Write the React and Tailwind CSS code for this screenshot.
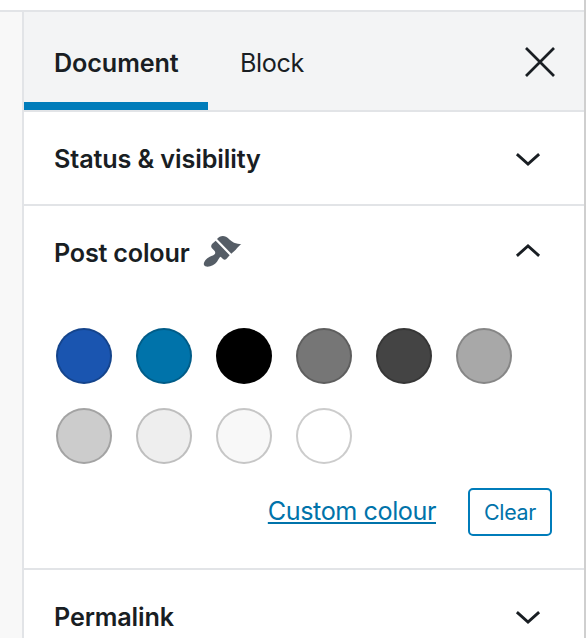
import React from "react";

const swatches = [
  "bg-[#1a55b0]",
  "bg-[#0073aa]",
  "bg-[#000000]",
  "bg-[#767676]",
  "bg-[#444444]",
  "bg-[#a8a8a8]",
  "bg-[#cccccc]",
  "bg-[#eeeeee]",
  "bg-[#f8f8f8]",
  "bg-[#ffffff]",
];

function Chevron({ up = false }) {
  return (
    <svg
      className={up ? "size-12 -scale-y-100" : "size-12"}
      viewBox="0 0 48 48"
      fill="none"
      stroke="#191e23"
      strokeWidth="2.9"
    >
      <path d="M12.9 20.2 24 30l11.1-9.8" />
    </svg>
  );
}

function Brush() {
  return (
    <svg className="mb-[3px] ml-[13px] h-[34px] w-10" viewBox="36 27 120 102" fill="#555d66">
      <path d="M81 42C88 34 97 31 108 35C116 39 122 48 132 53C139 56 147 56 154 57C145 63 138 76 124 86Z" />
      <path d="M77 47 119 91 109 102Q104 106 99 102L92 95C87 97 86 103 81 110C73 120 58 128 46 124C39 121 41 113 46 106C53 96 66 93 71 90C76 87 77 83 74 78L66 70Q61 64 66 57Z" />
    </svg>
  );
}

function PanelTitle({ children, up, icon, className = "" }) {
  return (
    <button className="flex h-[92px] w-full items-center pr-8 pl-[30px] text-left">
      <span className={`pt-0.5 text-[25.2px] leading-9 font-semibold whitespace-nowrap ${className}`}>
        {children}
      </span>
      {icon}
      <span className="ml-auto">
        <Chevron up={up} />
      </span>
    </button>
  );
}

export default function App() {
  return (
    <div className="flex h-[638px] w-[586px] overflow-hidden bg-white font-['Inter','Liberation_Sans',sans-serif] text-[#191e23]">
      <div className="flex w-[584px] flex-col">
        <div className="h-3 shrink-0 border-b-2 border-[#e2e4e7]" />
        <div className="flex min-h-0 flex-1">
          <div className="w-[22px] shrink-0 bg-[#f8f8f8]" />
          <aside className="w-[562px] shrink-0 border-l-2 border-[#e2e4e7]">
            <header className="flex h-[100px] items-stretch border-b-2 border-[#e2e4e7] bg-[#f3f4f5] text-[25.2px]">
              <button className="flex w-[184px] items-center border-b-8 border-[#007cba] pt-[13px] pl-[30px] font-semibold tracking-[-0.12px]">
                Document
              </button>
              <button className="flex items-center pt-[5px] pl-8 tracking-[-0.4px]">Block</button>
              <button className="mr-5 ml-auto flex items-center pt-[2px]" aria-label="Close settings">
                <svg className="size-12" viewBox="0 0 48 48" fill="none" stroke="#191e23" strokeWidth="2.7">
                  <path d="M10 10 38 38M38 10 10 38" />
                </svg>
              </button>
            </header>

            <section className="border-b-2 border-[#e2e4e7]">
              <PanelTitle className="tracking-[-0.12px]">Status &amp; visibility</PanelTitle>
            </section>

            <section className="h-[364px] border-b-2 border-[#e2e4e7]">
              <PanelTitle up icon={<Brush />} className="tracking-[-0.22px]">
                Post colour
              </PanelTitle>
              <div className="flex flex-wrap gap-6 pt-[30px] pl-8">
                {swatches.map((color) => (
                  <button key={color} className={`size-14 rounded-full border-2 border-black/20 ${color}`} />
                ))}
              </div>
              <div className="flex items-center justify-end gap-8 pt-6 pr-8 text-[#0073aa]">
                <a className="pb-0.5 text-[25.2px] leading-9 tracking-[-0.44px] whitespace-nowrap underline decoration-2 underline-offset-2">
                  Custom colour
                </a>
                <button className="h-12 w-[84px] rounded-[5px] border-2 border-[#007cba] text-[21.4px] tracking-[-0.3px]">
                  Clear
                </button>
              </div>
            </section>

            <section>
              <PanelTitle className="tracking-[-0.15px]">Permalink</PanelTitle>
            </section>
          </aside>
        </div>
      </div>
      <div className="w-0.5 bg-[#cfcfcf]" />
    </div>
  );
}
